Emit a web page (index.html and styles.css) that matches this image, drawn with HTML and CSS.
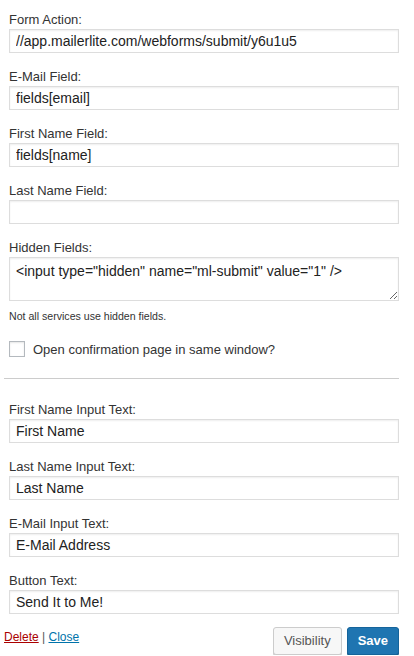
FILE: index.html
```html
<!DOCTYPE html>
<html>
<head>
<meta charset="utf-8">
<link rel="stylesheet" href="styles.css">
</head>
<body>
<div class="widget">
  <div class="fields">
    <div class="field">
      <label class="lbl">Form Action:</label>
      <input class="txt" type="text" value="//app.mailerlite.com/webforms/submit/y6u1u5">
    </div>
    <div class="field">
      <label class="lbl">E-Mail Field:</label>
      <input class="txt" type="text" value="fields[email]">
    </div>
    <div class="field">
      <label class="lbl">First Name Field:</label>
      <input class="txt" type="text" value="fields[name]">
    </div>
    <div class="field">
      <label class="lbl">Last Name Field:</label>
      <input class="txt" type="text" value="">
    </div>
    <div class="field field-area">
      <label class="lbl">Hidden Fields:</label>
      <textarea class="area">&lt;input type="hidden" name="ml-submit" value="1" /&gt;</textarea>
      <p class="note">Not all services use hidden fields.</p>
    </div>
    <div class="check-row">
      <input class="cb" type="checkbox">
      <span class="cb-text">Open confirmation page in same window?</span>
    </div>
  </div>
  <hr class="sep">
  <div class="fields">
    <div class="field">
      <label class="lbl">First Name Input Text:</label>
      <input class="txt" type="text" value="First Name">
    </div>
    <div class="field">
      <label class="lbl">Last Name Input Text:</label>
      <input class="txt" type="text" value="Last Name">
    </div>
    <div class="field">
      <label class="lbl">E-Mail Input Text:</label>
      <input class="txt" type="text" value="E-Mail Address">
    </div>
    <div class="field last">
      <label class="lbl">Button Text:</label>
      <input class="txt" type="text" value="Send It to Me!">
    </div>
  </div>
  <div class="actions">
    <div class="links"><a class="del" href="#">Delete</a> <span class="pipe">|</span> <a class="close" href="#">Close</a></div>
    <div class="btns">
      <button class="btn">Visibility</button>
      <button class="btn primary">Save</button>
    </div>
  </div>
</div>
</body>
</html>
```

FILE: styles.css
```css
html, body {
  margin: 0;
  padding: 0;
  background: #fff;
}
body {
  font-family: "Liberation Sans", Arial, Helvetica, sans-serif;
  color: #333;
  font-size: 13px;
}
.widget {
  padding: 11px 15px 0 4px;
}
.fields {
  padding-left: 5px;
}
.field {
  display: flex;
  flex-direction: column;
  margin-bottom: 15px;
}
.field.last {
  margin-bottom: 13px;
}
.lbl {
  font-size: 13px;
  line-height: 18px;
  color: #333;
}
.txt {
  box-sizing: border-box;
  height: 24px;
  width: 100%;
  margin: 0;
  padding: 0 6px;
  border: 1px solid #ddd;
  box-shadow: inset 0 1px 2px rgba(0,0,0,0.07);
  background: #fff;
  font-family: "Liberation Sans", Arial, Helvetica, sans-serif;
  font-size: 14px;
  color: #222;
  outline: none;
}
.area {
  box-sizing: border-box;
  display: block;
  height: 44px;
  width: 100%;
  margin: 0;
  padding: 4px 6px;
  border: 1px solid #ddd;
  box-shadow: inset 0 1px 2px rgba(0,0,0,0.07);
  font-family: "Liberation Sans", Arial, Helvetica, sans-serif;
  font-size: 14px;
  line-height: 18px;
  color: #222;
  resize: vertical;
  outline: none;
}
.field-area {
  margin-bottom: 0;
}
.note {
  margin: 8px 0 0;
  font-size: 10.6px;
  line-height: 15px;
  color: #333;
}
.check-row {
  display: flex;
  align-items: center;
  margin-top: 17px;
  height: 16px;
}
.cb {
  -webkit-appearance: none;
  appearance: none;
  box-sizing: border-box;
  width: 16px;
  height: 16px;
  margin: 0 8px 0 0;
  border: 1px solid #b4b9be;
  background: #fff;
  box-shadow: inset 0 1px 2px rgba(0,0,0,0.1);
}
.cb-text {
  font-size: 13px;
  color: #333;
}
.sep {
  margin: 21px 0 22px;
  border: 0;
  border-top: 1px solid #ccc;
  height: 0;
}
.actions {
  display: flex;
  justify-content: space-between;
  align-items: flex-start;
}
.links {
  font-size: 12px;
  line-height: 18px;
  padding-top: 1px;
  color: #555;
}
.del {
  color: #a00;
  text-decoration: underline;
}
.close {
  color: #0073aa;
  text-decoration: underline;
}
.btns {
  display: flex;
  gap: 5px;
}
.btn {
  box-sizing: border-box;
  height: 28px;
  margin: 0;
  padding: 0 10px;
  border: 1px solid #ccc;
  border-radius: 3px;
  background: #f7f7f7;
  box-shadow: 0 1px 0 #ccc;
  color: #555;
  font-family: "Liberation Sans", Arial, Helvetica, sans-serif;
  font-size: 13px;
  line-height: 26px;
}
.btn.primary {
  background: #1f75b1;
  border-color: #15649b;
  box-shadow: 0 1px 0 #125a8c;
  color: #fff;
  font-weight: bold;
}
```
